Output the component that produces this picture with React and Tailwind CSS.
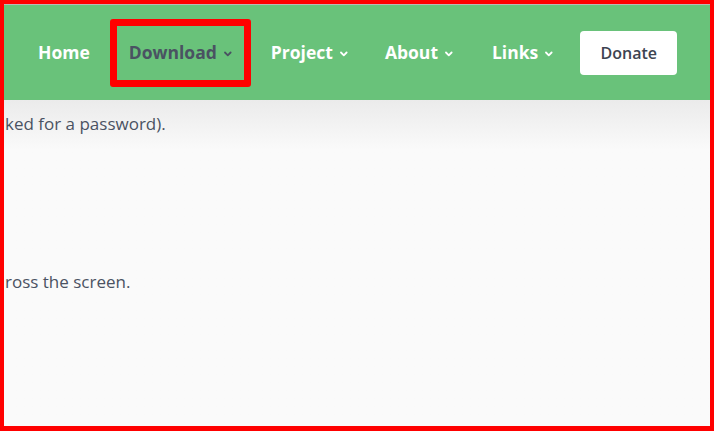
import React from "react";

function Chevron({ className = "" }) {
  return (
    <svg width="10" height="6" viewBox="0 0 10 6" className={className} fill="none">
      <path d="M1 1.5 L3.8 4.3 L6.6 1.5" stroke="currentColor" strokeWidth="1.8" strokeLinecap="round" strokeLinejoin="round" />
    </svg>
  );
}

function NavItem({ label, dropdown, dark, className = "" }) {
  return (
    <div className={`flex items-center gap-[7px] font-bold ${dark ? "text-[#4a5262]" : "text-white"} ${className}`}>
      <span>{label}</span>
      {dropdown && <Chevron className="mt-[2px]" />}
    </div>
  );
}

export default function App() {
  return (
    <div
      className="w-[714px] h-[431px] overflow-hidden border-x-4 border-t-4 border-b-[5px] border-[#ff0000] bg-[#fafafa] flex flex-col"
      style={{ fontFamily: '"Open Sans", "Noto Sans", sans-serif' }}
    >
      <nav className="h-[96px] shrink-0 border-t border-[#b9b9b9] bg-[#69c27a] flex items-center pl-[34px] text-[17.5px]">
        <div className="flex items-center">
          <NavItem label="Home" />
          <div className="relative ml-[39px]">
            <NavItem label="Download" dropdown dark />
            <span className="absolute left-[-19px] right-[-17px] top-1/2 -translate-y-1/2 h-[68px] border-[7px] border-[#ff0000] rounded-[3px]" />
          </div>
          <NavItem label="Project" dropdown className="ml-[37px]" />
          <NavItem label="About" dropdown className="ml-[35px]" />
          <NavItem label="Links" dropdown className="ml-[37px]" />
        </div>
        <button className="ml-[25px] w-[97px] h-[44px] rounded-[4px] bg-white text-[#3d4451] text-[16px] font-semibold">
          Donate
        </button>
      </nav>
      <div className="flex-1 bg-gradient-to-b from-[#ebebeb] to-[#fafafa] to-[50px] bg-no-repeat text-[17px] text-[#4a5262]">
        <p className="mt-[11px] ml-[1px] whitespace-nowrap">ked for a password).</p>
        <p className="mt-[132px] ml-[1px] whitespace-nowrap">ross the screen.</p>
      </div>
    </div>
  );
}
